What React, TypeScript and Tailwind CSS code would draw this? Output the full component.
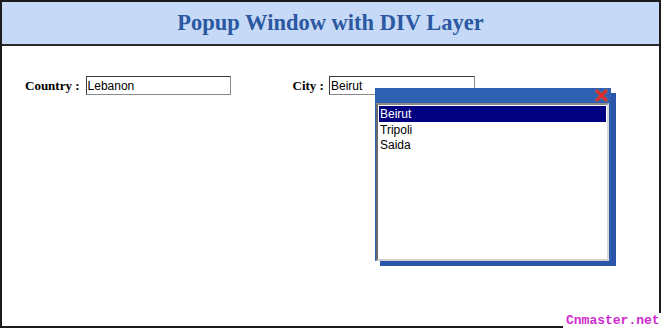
export default function App() {
  return (
    <div className="relative w-[662px] h-[329px] bg-white overflow-hidden">
      <div className="w-[661px] h-[328px] border-2 border-[#1c1c1c] flex flex-col">
        <div className="h-[44px] bg-[#c6daf7] border-b-2 border-[#2a2a2a] flex items-center justify-center shrink-0">
          <h1 className="text-[22.5px] font-bold text-[#2b58a0] font-['Liberation_Serif',serif] leading-none">
            Popup Window with DIV Layer
          </h1>
        </div>
        <div className="flex items-center mt-[30px] pl-[23px] font-['Liberation_Serif',serif] text-[13px] font-bold text-black">
          <span>Country :</span>
          <div className="ml-[6px] w-[145px] h-[19px] border border-[#3a3a3a] border-r-[#8a8a8a] border-b-[#8a8a8a] bg-white px-[1px] flex items-center font-['Liberation_Sans',sans-serif] font-normal text-[12px]">
            Lebanon
          </div>
          <span className="ml-[62px]">City :</span>
          <div className="ml-[5px] w-[146px] h-[19px] border border-[#3a3a3a] border-r-[#8a8a8a] border-b-[#8a8a8a] bg-white px-[1px] flex items-center font-['Liberation_Sans',sans-serif] font-normal text-[12px]">
            Beirut
          </div>
        </div>
      </div>

      {/* popup layer */}
      <div className="absolute left-[375px] top-[88px] w-[236px] h-[173px] bg-[#2f5fb0] shadow-[5px_5px_0_#2b55a8] flex flex-col">
        <div className="h-[15px] shrink-0 flex justify-end pr-[2px]">
          <svg width="15" height="15" viewBox="0 0 15 15">
            <path d="M3 3 L12 12 M12 3 L3 12" stroke="#6b6b7a" strokeWidth="4.5" strokeLinecap="round" />
            <path d="M3 3 L12 12 M12 3 L3 12" stroke="#e02828" strokeWidth="2.5" strokeLinecap="round" />
          </svg>
        </div>
        <div className="flex-1 ml-[1px] mr-[2px] bg-white border-2 border-t-[#8a8a8a] border-l-[#6a6a6a] border-r-[#d8d8d8] border-b-[#d0d0d0] p-[1px] font-['Liberation_Sans',sans-serif] text-[12px] leading-[15px] text-black">
          <div className="bg-[#000080] text-white pl-[1px] h-[16px] leading-[16px]">Beirut</div>
          <div className="pl-[1px] pt-[1px]">Tripoli</div>
          <div className="pl-[1px]">Saida</div>
        </div>
      </div>

      {/* watermark */}
      <div className="absolute right-0 bottom-0 w-[99px] h-[16px] bg-white pl-[3px] font-['Liberation_Mono',monospace] font-bold text-[13px] leading-[16px] text-[#cf2ccf]">
        Cnmaster.net
      </div>
    </div>
  );
}
